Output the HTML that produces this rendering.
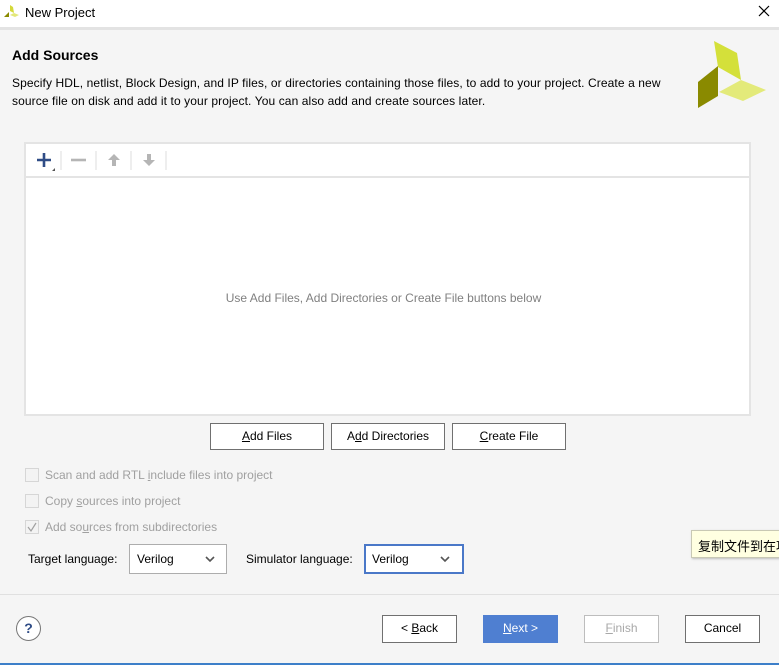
<!DOCTYPE html>
<html><head><style>
*{margin:0;padding:0;box-sizing:border-box}
body{width:779px;height:665px;overflow:hidden;background:#f5f5f5;font-family:"Liberation Sans","Noto Sans CJK SC",sans-serif;font-size:12px;color:#000;position:relative}
.a{position:absolute}
.btn{position:absolute;height:27px;background:#fff;border:1px solid #707070;text-align:center;line-height:25px;font-size:12px}
u{text-decoration:underline}
.cb{position:absolute;width:14px;height:14px;border:1px solid #d6d6d6;background:#f3f3f3;left:25px}
.dis{color:#a0a0a0}
.sel{position:absolute;height:30px;background:#fff;border:1px solid #adadad;top:544px;line-height:28px;padding-left:7px}
</style></head><body>
<div class="a" style="left:0;top:0;width:779px;height:27px;background:#fff"></div>
<div class="a" style="left:0;top:27px;width:779px;height:3px;background:#e3e3e3"></div>
<svg class="a" style="left:3px;top:3px" width="16" height="16"><polygon points="1,14 6,9 6,14" fill="#8a8a00"/><polygon points="7,2 10,4 11,10 7,8" fill="#d4d93a"/><polygon points="7,12 11,10 16,12 12,14" fill="#e3e87a"/></svg>
<div class="a" style="left:25px;top:5px;font-size:13px">New Project</div>
<svg class="a" style="left:758px;top:5px" width="12" height="12"><path d="M1 1L11 11M11 1L1 11" stroke="#000" stroke-width="1.2"/></svg>
<div class="a" style="left:12px;top:47px;font-size:14px;font-weight:bold">Add Sources</div>
<div class="a" style="left:12px;top:74px;line-height:18px;width:655px;letter-spacing:0.1px">Specify HDL, netlist, Block Design, and IP files, or directories containing those files, to add to your project. Create a new source file on disk and add it to your project. You can also add and create sources later.</div>
<svg class="a" style="left:0;top:0" width="779" height="120"><polygon points="714,41 737,53 741,80 718,67" fill="#d4e03a"/><polygon points="698,82 718,66 718,96 698,108" fill="#8a8a00"/><polygon points="719,92 741,80 766,90 743,101" fill="#e3ea7a"/></svg>
<div class="a" style="left:24px;top:142px;width:727px;height:274px;border:2px solid #e4e4e4;background:#fff"></div>
<div class="a" style="left:26px;top:176px;width:723px;height:2px;background:#e4e4e4"></div>
<svg class="a" style="left:34px;top:150px" width="140" height="22"><path d="M3 10H17M10 3V17" stroke="#2f4c86" stroke-width="2.6"/><polygon points="18,21 21,21 21,18" fill="#555"/>
<line x1="27" y1="1" x2="27" y2="20" stroke="#ddd"/><path d="M37 10H52" stroke="#b5b5b5" stroke-width="2.6"/><line x1="62" y1="1" x2="62" y2="20" stroke="#ddd"/>
<path d="M80 4L74 10H78V16H82V10H86Z" fill="#b5b5b5"/><line x1="97" y1="1" x2="97" y2="20" stroke="#ddd"/>
<path d="M115 16L109 10H113V4H117V10H121Z" fill="#b5b5b5"/><line x1="132" y1="1" x2="132" y2="20" stroke="#ddd"/></svg>
<div class="a" style="left:0;width:779px;text-align:center;top:291px;color:#808080;font-size:12px;padding-right:12px">Use Add Files, Add Directories or Create File buttons below</div>
<div class="btn" style="left:210px;top:423px;width:114px"><u>A</u>dd Files</div>
<div class="btn" style="left:331px;top:423px;width:114px">A<u>d</u>d Directories</div>
<div class="btn" style="left:452px;top:423px;width:114px"><u>C</u>reate File</div>
<div class="cb" style="top:468px"></div><div class="a dis" style="left:45px;top:468px">Scan and add RTL <u>i</u>nclude files into project</div>
<div class="cb" style="top:494px"></div><div class="a dis" style="left:45px;top:494px">Copy <u>s</u>ources into project</div>
<div class="cb" style="top:520px"></div><svg class="a" style="left:26px;top:521px" width="12" height="12"><path d="M2 6L5 10L10 2" stroke="#a0a0a0" fill="none" stroke-width="1.2"/></svg><div class="a dis" style="left:45px;top:520px">Add so<u>u</u>rces from subdirectories</div>
<div class="a" style="left:28px;top:552px">Target language:</div>
<div class="sel" style="left:129px;width:98px">Verilog<svg class="a" style="left:75px;top:11px" width="10" height="7"><path d="M1 1L5 5L9 1" stroke="#555" stroke-width="1.6" fill="none"/></svg></div>
<div class="a" style="left:246px;top:552px">Simulator language:</div>
<div class="sel" style="left:364px;width:100px;border:2px solid #4a78c8;line-height:26px;padding-left:6px">Verilog<svg class="a" style="left:74px;top:10px" width="10" height="7"><path d="M1 1L5 5L9 1" stroke="#555" stroke-width="1.6" fill="none"/></svg></div>
<div class="a" style="left:691px;top:530px;width:95px;height:28px;background:#ffffe1;border:1px solid #c8c8b4;box-shadow:1px 1px 2px #bbb;padding:5px 0 0 6px;font-size:13px;white-space:nowrap;overflow:hidden">复制文件到在项</div>
<div class="a" style="left:0;top:594px;width:779px;height:1px;background:#e0e0e0"></div>
<div class="a" style="left:16px;top:616px;width:25px;height:25px;border:1.5px solid #777;border-radius:50%;background:#fff;text-align:center;line-height:22px;font-weight:bold;color:#2f4c86;font-size:14px">?</div>
<div class="btn" style="left:382px;top:615px;width:75px;height:28px">&lt; <u>B</u>ack</div>
<div class="btn" style="left:483px;top:615px;width:75px;height:28px;background:#4f7fd1;border-color:#4f7fd1;color:#fff"><u>N</u>ext &gt;</div>
<div class="btn" style="left:584px;top:615px;width:75px;height:28px;border-color:#bdbdbd;color:#a8a8a8"><u>F</u>inish</div>
<div class="btn" style="left:685px;top:615px;width:75px;height:28px">Cancel</div>
<div class="a" style="left:0;top:663px;width:779px;height:2px;background:#3d7fc9"></div>
</body></html>
